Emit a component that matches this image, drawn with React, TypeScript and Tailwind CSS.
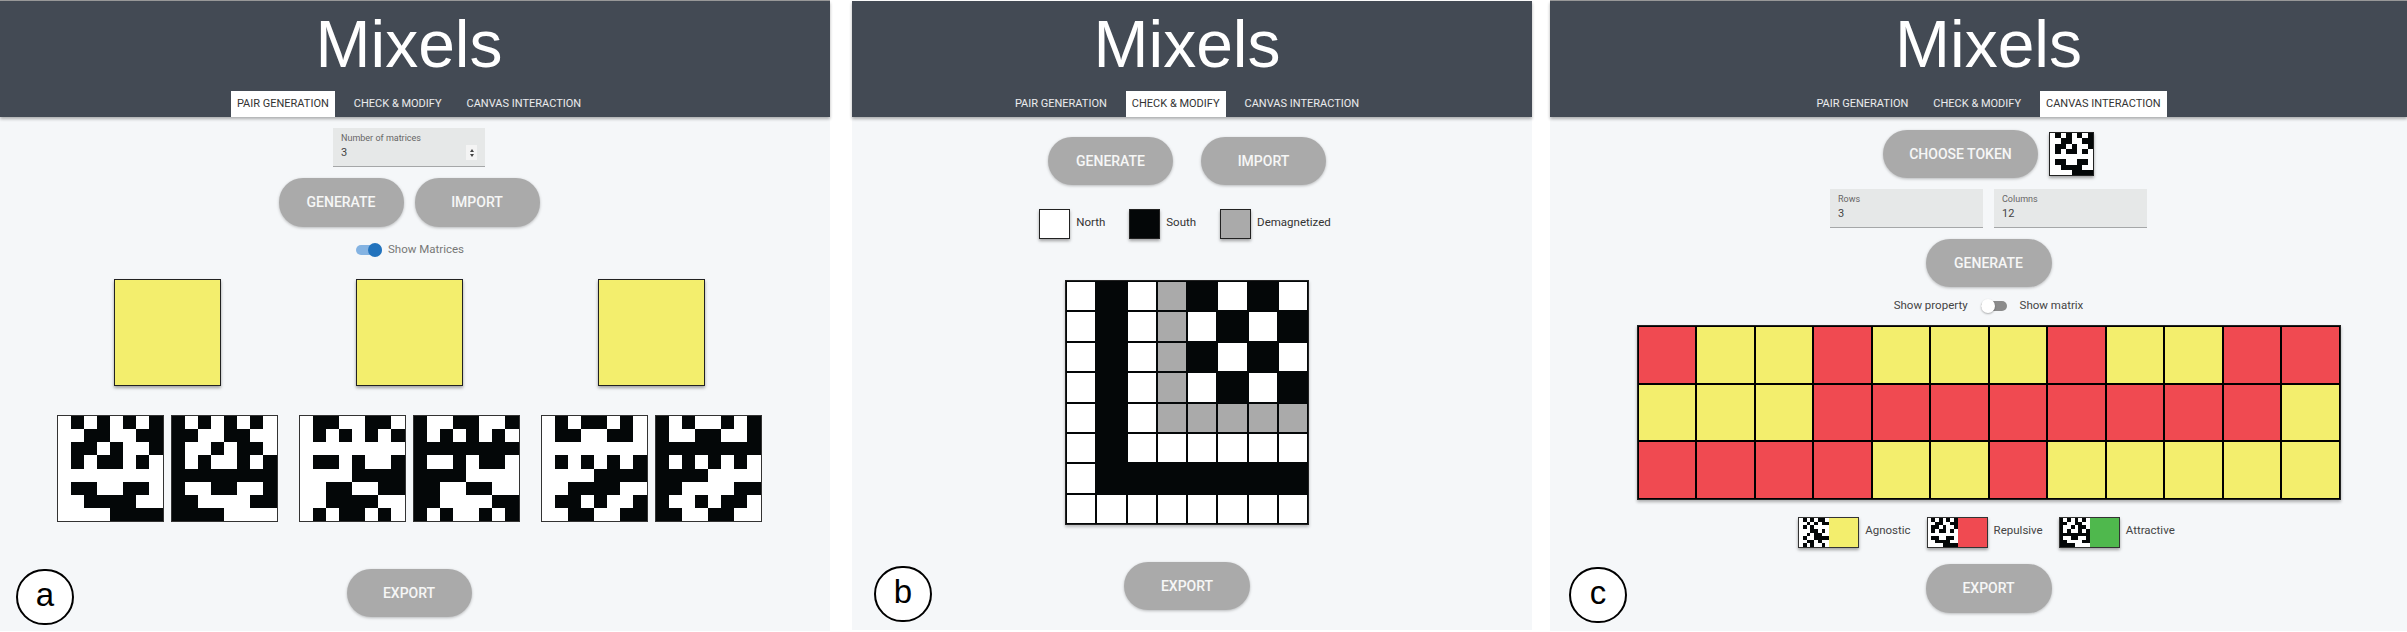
import React from 'react';

const yellow = 'bg-[#f3ee6d]';
const red = 'bg-[#f04a51]';

const matrixA = ['01010101', '00110011', '01101001', '01011010', '00000000', '01100110', '00111100', '00001111'];
const matrixB = ['01100110', '01010101', '00000000', '01101001', '00001111', '00110011', '00111100', '01011010'];
const matrixC = ['01011010', '01100110', '00000000', '01010101', '00001111', '00111100', '01101001', '00110011'];
const matrixD = ['01010110', '00101011', '01010000', '00011010', '00101100', '01001111', '00110100', '01010010'];

const invert = (rows: string[]) => rows.map((r) => r.split('').map((c) => (c === '1' ? '0' : '1')).join(''));

const checkGrid = [
  '01021010',
  '01020101',
  '01021010',
  '01020101',
  '01022222',
  '01000000',
  '01111111',
  '00000000',
];

const canvasGrid = ['RYYRYYYRYYRR', 'YYYRRRRRRRRY', 'RRRRYYRYYYYY'];

const Matrix: React.FC<{ rows: string[]; className: string }> = ({ rows, className }) => (
  <div className={`grid grid-cols-8 grid-rows-8 shrink-0 bg-white ${className}`}>
    {rows.flatMap((row, y) =>
      row.split('').map((c, x) => <div key={`${x}-${y}`} className={c === '1' ? 'bg-[#040708]' : 'bg-white'} />)
    )}
  </div>
);

const PillButton: React.FC<{ label: string; width?: string; height?: string }> = ({
  label,
  width = 'w-[125px]',
  height = 'h-[48px]',
}) => (
  <button
    className={`${width} ${height} shrink-0 rounded-[24px] bg-[#aaaaaa] text-[14px] font-medium text-white/90 shadow-[0_1px_3px_rgba(0,0,0,0.25)]`}
  >
    {label}
  </button>
);

const Header: React.FC<{ active: number; className: string }> = ({ active, className }) => {
  const tabs = ['PAIR GENERATION', 'CHECK & MODIFY', 'CANVAS INTERACTION'];
  return (
    <header className={`flex h-[116px] shrink-0 flex-col items-center bg-[#434a54] shadow-[0_2px_3px_rgba(0,0,0,0.3)] ${className}`}>
      <h1 className="h-[90px] font-['Liberation_Sans',sans-serif] text-[66px] leading-[86px] text-white">Mixels</h1>
      <nav className="flex h-[26px] gap-[13px]">
        {tabs.map((tab, i) => (
          <div
            key={tab}
            className={`flex items-center px-[6px] text-[11px] ${i === active ? 'bg-white text-[#333]' : 'text-white/90'}`}
          >
            {tab}
          </div>
        ))}
      </nav>
    </header>
  );
};

const Field: React.FC<{ label: string; value: string; spinner?: boolean }> = ({ label, value, spinner }) => (
  <div className="relative flex h-[39px] w-full flex-col border-b-[1.5px] border-[#a5a7a8] bg-[#e6e8e8] px-2 pt-[3px]">
    <span className="text-[9px] leading-[14px] text-[#666]">{label}</span>
    <span className="text-[11px] leading-[16px] text-[#444]">{value}</span>
    {spinner && (
      <div className="absolute right-[8px] top-[17px] flex h-[15px] w-[11px] flex-col items-center justify-center gap-[2px] bg-[#f4f4f4]">
        <div className="h-0 w-0 border-x-[2.5px] border-b-[3px] border-x-transparent border-b-[#444]" />
        <div className="h-0 w-0 border-x-[2.5px] border-t-[3px] border-x-transparent border-t-[#444]" />
      </div>
    )}
  </div>
);

const Badge: React.FC<{ letter: string; left: string; top: string }> = ({ letter, left, top }) => (
  <div
    className={`absolute flex h-[56px] w-[58px] items-center justify-center rounded-full border-[2.5px] border-black bg-white pb-1 font-['Liberation_Sans',sans-serif] text-[33px] text-black ${left} ${top}`}
  >
    {letter}
  </div>
);

const PanelA = () => {
  const pairs = [matrixA, matrixB, matrixC];
  return (
    <section className="relative flex h-[631px] w-[830px] shrink-0 flex-col border-t border-[#9b9b9b] bg-[#f5f7f9]">
      <Header active={0} className="pr-[12px]" />
      <div className="flex flex-col items-center pr-[12px] pt-[11px]">
        <div className="w-[152px]">
          <Field label="Number of matrices" value="3" spinner />
        </div>
        <div className="mt-[11px] flex gap-[11px]">
          <PillButton label="GENERATE" height="h-[49px]" />
          <PillButton label="IMPORT" height="h-[49px]" />
        </div>
        <div className="mt-[16px] flex h-[14px] items-center gap-[6px] pl-[2px]">
          <div className="relative h-[10px] w-[26px] rounded-full bg-[#84b3e2]">
            <div className="absolute -top-[2px] right-0 h-[14px] w-[14px] rounded-full bg-[#2273bd]" />
          </div>
          <span className="text-[11.5px] text-[#777]">Show Matrices</span>
        </div>
        <div className="mt-[22px] flex gap-[135px]">
          {pairs.map((_, i) => (
            <div
              key={i}
              className={`h-[107px] w-[107px] border-[1.5px] border-[#222] shadow-[0_2px_3px_rgba(0,0,0,0.35)] ${yellow}`}
            />
          ))}
        </div>
        <div className="mt-[29px] flex gap-[21px]">
          {pairs.map((m, i) => (
            <div key={i} className="flex gap-[7px]">
              <Matrix rows={m} className="h-[107px] w-[107px] border-[1.5px] border-[#333]" />
              <Matrix rows={invert(m)} className="h-[107px] w-[107px] border-[1.5px] border-[#333]" />
            </div>
          ))}
        </div>
        <div className="mt-[47px]">
          <PillButton label="EXPORT" />
        </div>
      </div>
      <Badge letter="a" left="left-[16px]" top="top-[568px]" />
    </section>
  );
};

const Swatch: React.FC<{ color: string; label: string }> = ({ color, label }) => (
  <div className="flex items-center gap-[6px]">
    <div className={`h-[30px] w-[31px] border-[1.5px] border-[#222] shadow-[0_2px_3px_rgba(0,0,0,0.35)] ${color}`} />
    <span className="pb-[3px] text-[11.5px] text-[#333]">{label}</span>
  </div>
);

const PanelB = () => {
  const cellColor: Record<string, string> = { '0': 'bg-white', '1': 'bg-[#040708]', '2': 'bg-[#aaaaaa]' };
  return (
    <section className="relative ml-[22px] mt-[1px] flex h-[629px] w-[680px] shrink-0 flex-col bg-[#f5f7f9]">
      <Header active={1} className="pr-[10px]" />
      <div className="flex flex-col items-center pr-[10px] pt-[20px]">
        <div className="flex gap-[28px]">
          <PillButton label="GENERATE" />
          <PillButton label="IMPORT" />
        </div>
        <div className="mr-[4px] mt-[24px] flex gap-[24px]">
          <Swatch color="bg-white" label="North" />
          <Swatch color="bg-[#040708]" label="South" />
          <Swatch color="bg-[#aaaaaa]" label="Demagnetized" />
        </div>
        <div className="mt-[41px] grid h-[245px] w-[244px] grid-cols-8 grid-rows-8 border-[1px] border-[#222] bg-[#040708] shadow-[0_2px_3px_rgba(0,0,0,0.25)]">
          {checkGrid.flatMap((row, y) =>
            row.split('').map((c, x) => (
              <div key={`${x}-${y}`} className={`border-[1.5px] border-[#040708] ${cellColor[c]}`} />
            ))
          )}
        </div>
        <div className="mt-[37px]">
          <PillButton label="EXPORT" width="w-[126px]" />
        </div>
      </div>
      <Badge letter="b" left="left-[22px]" top="top-[565px]" />
    </section>
  );
};

const LegendItem: React.FC<{ rows: string[]; color: string; label: string }> = ({ rows, color, label }) => (
  <div className="flex items-center gap-[6px]">
    <div className="flex h-[31px] w-[61px] border-[1.5px] border-[#333] shadow-[0_2px_3px_rgba(0,0,0,0.35)]">
      <Matrix rows={rows} className="h-full w-[30px]" />
      <div className={`flex-1 ${color}`} />
    </div>
    <span className="pb-[3px] text-[11.5px] text-[#444]">{label}</span>
  </div>
);

const PanelC = () => (
  <section className="relative ml-[18px] flex h-[631px] w-[857px] shrink-0 flex-col border-t border-[#9b9b9b] bg-[#f5f7f9]">
    <Header active={2} className="pl-[20px]" />
    <div className="flex flex-col items-center pl-[20px] pt-[13px]">
      <div className="flex items-center gap-[11px]">
        <PillButton label="CHOOSE TOKEN" width="w-[155px]" />
        <Matrix rows={matrixA} className="h-[44px] w-[45px] border-[1.5px] border-[#222] shadow-[0_2px_3px_rgba(0,0,0,0.35)]" />
      </div>
      <div className="mt-[11px] flex gap-[11px]">
        <div className="w-[153px]">
          <Field label="Rows" value="3" />
        </div>
        <div className="w-[153px]">
          <Field label="Columns" value="12" />
        </div>
      </div>
      <div className="mt-[11px]">
        <PillButton label="GENERATE" width="w-[126px]" />
      </div>
      <div className="mt-[9px] flex h-[20px] items-center text-[11.5px] text-[#444]">
        <span>Show property</span>
        <div className="relative mx-[13px] h-[10px] w-[26px] rounded-full bg-[#8b8b8b]">
          <div className="absolute -top-[2px] left-0 h-[14px] w-[14px] rounded-full bg-white shadow-[0_1px_2px_rgba(0,0,0,0.3)]" />
        </div>
        <span>Show matrix</span>
      </div>
      <div className="mt-[9px] grid h-[175px] w-[704px] grid-cols-12 grid-rows-3 border-[1px] border-[#222] bg-black shadow-[0_2px_3px_rgba(0,0,0,0.3)]">
        {canvasGrid.flatMap((row, y) =>
          row.split('').map((c, x) => (
            <div key={`${x}-${y}`} className={`border-[1.5px] border-black ${c === 'R' ? red : yellow}`} />
          ))
        )}
      </div>
      <div className="mr-[4px] mt-[17px] flex gap-[16px]">
        <LegendItem rows={matrixD} color={yellow} label="Agnostic" />
        <LegendItem rows={matrixA} color={red} label="Repulsive" />
        <LegendItem rows={invert(matrixA)} color="bg-[#4fb84d]" label="Attractive" />
      </div>
      <div className="mt-[16px]">
        <PillButton label="EXPORT" width="w-[126px]" height="h-[49px]" />
      </div>
    </div>
    <Badge letter="c" left="left-[19px]" top="top-[566px]" />
  </section>
);

const App: React.FC = () => (
  <main className="flex h-[632px] w-[2407px] overflow-hidden bg-white font-['Roboto',sans-serif]">
    <PanelA />
    <PanelB />
    <PanelC />
  </main>
);

export default App;
